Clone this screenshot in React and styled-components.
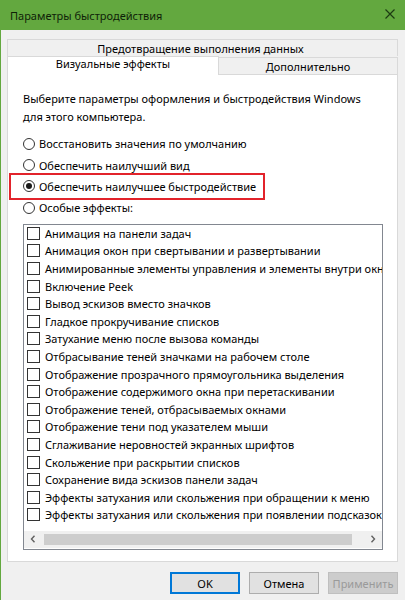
import React from "react"
import { styled, createGlobalStyle } from "styled-components"

const effects = [
  "Анимация на панели задач",
  "Анимация окон при свертывании и развертывании",
  "Анимированные элементы управления и элементы внутри окна",
  "Включение Peek",
  "Вывод эскизов вместо значков",
  "Гладкое прокручивание списков",
  "Затухание меню после вызова команды",
  "Отбрасывание теней значками на рабочем столе",
  "Отображение прозрачного прямоугольника выделения",
  "Отображение содержимого окна при перетаскивании",
  "Отображение теней, отбрасываемых окнами",
  "Отображение тени под указателем мыши",
  "Сглаживание неровностей экранных шрифтов",
  "Скольжение при раскрытии списков",
  "Сохранение вида эскизов панели задач",
  "Эффекты затухания или скольжения при обращении к меню",
  "Эффекты затухания или скольжения при появлении подсказок",
]

const radios = [
  { label: "Восстановить значения по умолчанию" },
  { label: "Обеспечить наилучший вид" },
  { label: "Обеспечить наилучшее быстродействие", checked: true, marked: true },
  { label: "Особые эффекты:" },
]

export default function App() {
  return (
    <>
      <GlobalStyle />
      <Window>
        <TitleBar>
          <span>Параметры быстродействия</span>
          <CloseIcon viewBox="0 0 10 10">
            <path d="M0.5 0.5 L9.5 9.5 M9.5 0.5 L0.5 9.5" />
          </CloseIcon>
        </TitleBar>
        <Body>
          <Tabs>
            <BackTab>Предотвращение выполнения данных</BackTab>
            <TabRow>
              <Tab $active>Визуальные эффекты</Tab>
              <Tab>Дополнительно</Tab>
            </TabRow>
          </Tabs>
          <Panel>
            <Description>
              Выберите параметры оформления и быстродействия Windows
              <br />
              для этого компьютера.
            </Description>
            <RadioGroup>
              {radios.map((r) => (
                <RadioRow key={r.label} $marked={r.marked}>
                  <RadioCircle $checked={r.checked} />
                  {r.label}
                </RadioRow>
              ))}
            </RadioGroup>
            <ListBox>
              <ListRows>
                {effects.map((e) => (
                  <CheckRow key={e}>
                    <CheckBox />
                    {e}
                  </CheckRow>
                ))}
              </ListRows>
              <HScroll>
                <Arrow viewBox="0 0 6 8">
                  <path d="M4.5 0.8 L1.5 4 L4.5 7.2" />
                </Arrow>
                <Thumb />
                <Arrow viewBox="0 0 6 8">
                  <path d="M1.5 0.8 L4.5 4 L1.5 7.2" />
                </Arrow>
              </HScroll>
            </ListBox>
          </Panel>
          <Buttons>
            <Button $default>OK</Button>
            <Button>Отмена</Button>
            <Button disabled>Применить</Button>
          </Buttons>
        </Body>
      </Window>
    </>
  )
}

const GlobalStyle = createGlobalStyle`
  body {
    margin: 0;
    background: #f0f0f0;
    font-family: "Noto Sans", "DejaVu Sans", sans-serif;
    font-size: 11px;
    color: #000;
  }
`

const Window = styled.div`
  width: 405px;
  height: 600px;
  box-sizing: border-box;
  border-left: 1px solid #63a83f;
  background: #f0f0f0;
  overflow: hidden;
  display: flex;
  flex-direction: column;
`

const TitleBar = styled.div`
  height: 30px;
  flex: none;
  background: #63a83f;
  display: flex;
  align-items: center;
  justify-content: space-between;
  padding: 0 10px 0 9px;
  font-size: 11px;
  color: #0f1f08;
`

const CloseIcon = styled.svg`
  width: 10px;
  height: 10px;
  margin-bottom: 2px;
  fill: none;
  stroke: #1c3a12;
  stroke-width: 1.2;
`

const Body = styled.div`
  flex: 1;
  display: flex;
  flex-direction: column;
  padding: 9px 7px 0 6px;
`

const Tabs = styled.div`
  display: flex;
  flex-direction: column;
  position: relative;
  z-index: 1;
`

const BackTab = styled.div`
  height: 17px;
  box-sizing: border-box;
  border: 1px solid #d9d9d9;
  border-bottom: none;
  background: #f0f0f0;
  text-align: center;
  line-height: 17px;
  padding-right: 4px;
`

const TabRow = styled.div`
  display: flex;
  align-items: flex-end;
  height: 19px;
  margin-bottom: -1px;
`

const Tab = styled.div`
  box-sizing: border-box;
  text-align: center;
  border: 1px solid #d9d9d9;
  ${(p) =>
    p.$active
      ? `
    width: 212px;
    height: 19px;
    background: #fff;
    border-bottom: none;
    line-height: 13px;
  `
      : `
    flex: 1;
    height: 18px;
    background: #f0f0f0;
    border-left: none;
    line-height: 18px;
  `}
`

const Panel = styled.div`
  height: 488px;
  box-sizing: border-box;
  background: #fff;
  border: 1px solid #d9d9d9;
  padding: 15px 13px 0 15px;
  display: flex;
  flex-direction: column;
`

const Description = styled.div`
  line-height: 18px;
`

const RadioGroup = styled.div`
  margin-top: 7px;
  display: flex;
  flex-direction: column;
`

const RadioRow = styled.div`
  position: relative;
  display: flex;
  align-items: center;
  gap: 4px;
  height: 21.4px;
  white-space: nowrap;

  ${(p) =>
    p.$marked &&
    `
    &::before {
      content: "";
      position: absolute;
      left: -14px;
      top: -3px;
      width: 256px;
      height: 27px;
      box-sizing: border-box;
      border: 2.5px solid #e2232b;
    }
  `}
`

const RadioCircle = styled.span`
  width: 12px;
  height: 12px;
  box-sizing: border-box;
  border-radius: 50%;
  border: 1px solid #333;
  background: #fff;
  flex: none;
  display: flex;
  align-items: center;
  justify-content: center;

  &::after {
    content: "";
    width: 6px;
    height: 6px;
    border-radius: 50%;
    background: ${(p) => (p.$checked ? "#1a1a1a" : "transparent")};
  }
`

const ListBox = styled.div`
  margin-top: 5px;
  width: 360px;
  height: 326px;
  box-sizing: border-box;
  border: 1px solid #828790;
  display: flex;
  flex-direction: column;
  overflow: hidden;
`

const ListRows = styled.div`
  flex: 1;
  overflow: hidden;
  padding: 0 0 0 3px;
`

const CheckRow = styled.div`
  display: flex;
  align-items: center;
  gap: 5px;
  height: 17.6px;
  white-space: nowrap;
`

const CheckBox = styled.span`
  width: 13px;
  height: 13px;
  box-sizing: border-box;
  border: 1px solid #333;
  background: #fff;
  flex: none;
`

const HScroll = styled.div`
  height: 17px;
  flex: none;
  margin-bottom: 1px;
  background: #f0f0f0;
  display: flex;
  align-items: center;
  gap: 8px;
  padding: 0 6px;
`

const Arrow = styled.svg`
  width: 6px;
  height: 8px;
  flex: none;
  fill: none;
  stroke: #606060;
  stroke-width: 1.4;
`

const Thumb = styled.div`
  flex: 1;
  height: 11px;
  background: #cdcdcd;
  margin-right: 10px;
`

const Buttons = styled.div`
  display: flex;
  justify-content: flex-end;
  gap: 9px;
  margin-top: 10px;
`

const Button = styled.button`
  width: 70px;
  height: 22px;
  box-sizing: border-box;
  font-family: inherit;
  font-size: 11px;
  padding: 0;
  background: ${(p) => (p.disabled ? "#cccccc" : "#e1e1e1")};
  color: ${(p) => (p.disabled ? "#9a9a9a" : "#000")};
  border: ${(p) =>
    p.$default ? "2px solid #0078d7" : p.disabled ? "1px solid #bfbfbf" : "1px solid #adadad"};
`
